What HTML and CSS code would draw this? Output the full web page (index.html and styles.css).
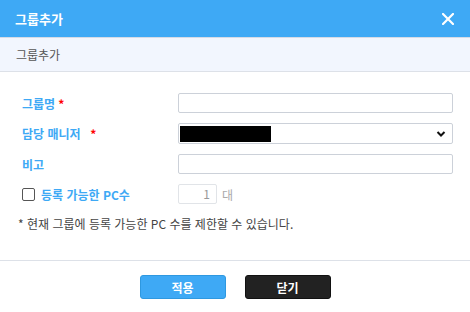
FILE: index.html
```html
<!DOCTYPE html>
<html lang="ko">
<head>
  <meta charset="UTF-8">
  <title>그룹추가</title>
  <link rel="stylesheet" href="styles.css">
</head>
<body>
  <div class="dialog">
    <div class="dialog-header">
      <span class="dialog-title">그룹추가</span>
      <button class="close-btn" type="button" aria-label="닫기">
        <svg width="12" height="12" viewBox="0 0 12 12"><path d="M1 1L11 11M11 1L1 11" stroke="#fff" stroke-width="2.2" stroke-linecap="square"/></svg>
      </button>
    </div>
    <div class="dialog-sub">그룹추가</div>
    <form class="dialog-body">
      <div class="row">
        <label class="field-label">그룹명 <span class="req">*</span></label>
        <input class="text-input" type="text">
      </div>
      <div class="row">
        <label class="field-label">담당 매니저 &nbsp;<span class="req">*</span></label>
        <div class="select-box">
          <span class="masked"></span>
          <svg width="10" height="8" viewBox="0 0 10 8"><path d="M1.5 2L5 5.5L8.5 2" stroke="#111" stroke-width="2" fill="none"/></svg>
        </div>
      </div>
      <div class="row">
        <label class="field-label">비고</label>
        <input class="text-input" type="text">
      </div>
      <div class="row">
        <label class="field-label check-label"><span class="checkbox"></span>등록 가능한 PC수</label>
        <div class="pc-count">
          <span class="num-input">1</span>
          <span class="unit">대</span>
        </div>
      </div>
      <p class="note">* 현재 그룹에 등록 가능한 PC 수를 제한할 수 있습니다.</p>
    </form>
    <div class="dialog-footer">
      <button class="btn btn-apply" type="button">적용</button>
      <button class="btn btn-close" type="button">닫기</button>
    </div>
  </div>
</body>
</html>
```

FILE: styles.css
```css
body {
  margin: 0;
  padding: 0;
  background: #fff;
  font-family: "Noto Sans CJK KR", "Noto Sans", sans-serif;
}
.dialog {
  width: 470px;
  height: 312px;
  background: #fff;
}
.dialog-header {
  height: 37px;
  background: #3ea9f5;
  display: flex;
  align-items: center;
  justify-content: space-between;
  padding: 0 15px 0 15px;
  box-sizing: border-box;
}
.dialog-title {
  color: #fff;
  font-size: 13px;
  font-weight: bold;
}
.close-btn {
  border: none;
  background: none;
  padding: 0;
  width: 14px;
  height: 14px;
  display: flex;
  align-items: center;
  justify-content: center;
  cursor: pointer;
}
.dialog-sub {
  height: 33px;
  background: #f2f6fe;
  border-top: 1px solid #d5dbe6;
  border-bottom: 1px solid #dde1e8;
  box-sizing: content-box;
  display: flex;
  align-items: center;
  padding-left: 16px;
  font-size: 12px;
  color: #555;
}
.dialog-body {
  margin: 0;
  padding: 21px 17px 0 22px;
  height: 167px;
  border-bottom: 1px solid #dde1e8;
}
.row {
  display: flex;
  align-items: center;
  margin-bottom: 10px;
}
.field-label {
  width: 156px;
  font-size: 12px;
  font-weight: bold;
  color: #3ea9f5;
  display: flex;
  align-items: center;
}
.req {
  color: #f00;
  margin-left: 3px;
}
.text-input {
  width: 275px;
  height: 20px;
  box-sizing: border-box;
  border: 1px solid #ccd1d9;
  border-radius: 2px;
  padding: 0 4px;
  margin: 0;
}
.select-box {
  width: 275px;
  height: 21px;
  box-sizing: border-box;
  border: 1px solid #ccd1d9;
  border-radius: 2px;
  display: flex;
  align-items: center;
  justify-content: space-between;
  padding: 0 6px 0 1px;
}
.masked {
  width: 91px;
  height: 16px;
  background: #000;
}
.checkbox {
  width: 11px;
  height: 11px;
  border: 1px solid #555;
  border-radius: 2px;
  margin-right: 6px;
}
.pc-count {
  display: flex;
  align-items: center;
}
.num-input {
  width: 39px;
  height: 20px;
  box-sizing: border-box;
  border: 1px solid #e1e4e8;
  border-radius: 2px;
  text-align: right;
  padding-right: 6px;
  font-size: 12px;
  line-height: 18px;
  color: #999;
}
.unit {
  margin-left: 5px;
  font-size: 12px;
  color: #aaa;
}
.note {
  margin: 11px 0 0 -4px;
  font-size: 12px;
  color: #444;
}
.dialog-footer {
  display: flex;
  justify-content: center;
  gap: 19px;
  padding-top: 14px;
}
.btn {
  width: 86px;
  height: 24px;
  border-radius: 3px;
  font-family: "Noto Sans CJK KR", sans-serif;
  font-size: 12px;
  font-weight: bold;
  cursor: pointer;
  padding: 0;
}
.btn-apply {
  background: #3ea9f5;
  border: 1px solid #2e98e0;
  color: #fff;
}
.btn-close {
  background: #222;
  border: 1px solid #111;
  color: #fff;
}
```
